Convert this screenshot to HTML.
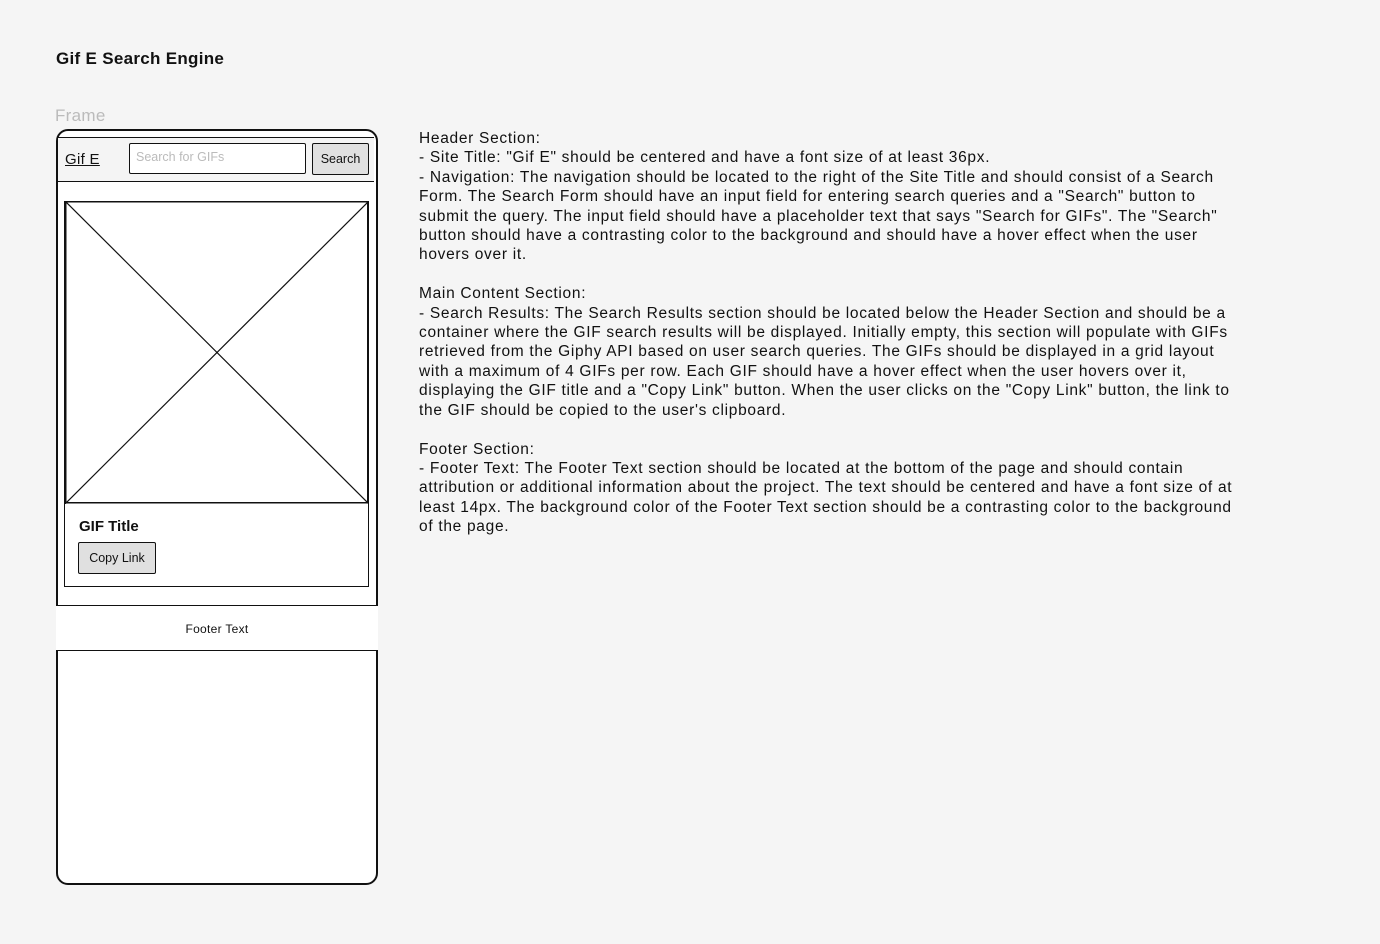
<!DOCTYPE html>
<html><head><style>
body{margin:0;width:1380px;height:944px;background:#f5f5f5;font-family:"Liberation Sans",sans-serif;position:relative;overflow:hidden}
.a{position:absolute}
</style></head><body>
<div class="a" style="left:56px;top:49px;font-size:17px;font-weight:bold;color:#111;letter-spacing:0.3px">Gif E Search Engine</div>
<div class="a" style="left:55px;top:106px;font-size:17px;color:#bbb;letter-spacing:0.3px">Frame</div>
<div class="a" style="left:56px;top:129px;width:318px;height:752px;border:2px solid #111;border-radius:12px;background:#fff"></div>
<div class="a" style="left:58px;top:137px;width:316px;height:43px;background:#f4f4f4;border-top:1.5px solid #111;border-bottom:1.5px solid #111"></div>
<div class="a" style="left:65px;top:151px;font-size:15px;color:#111;text-decoration:underline;letter-spacing:0.3px">Gif E</div>
<div class="a" style="left:129px;top:143px;width:175px;height:29px;border:1.5px solid #111;border-radius:2px;background:#fff"></div>
<div class="a" style="left:136px;top:150px;font-size:12.5px;color:#bbb">Search for GIFs</div>
<div class="a" style="left:312px;top:143px;width:55px;height:30px;border:1.5px solid #111;border-radius:2px;background:#e0e0e0;font-size:12.5px;line-height:31px;text-align:center;color:#111">Search</div>
<div class="a" style="left:64px;top:201px;width:303px;height:384px;border:1.5px solid #111"></div>
<svg class="a" style="left:65px;top:201px" width="304" height="303"><rect x="0.75" y="0.75" width="302" height="301" fill="none" stroke="#111" stroke-width="1.5"/><line x1="0" y1="0" x2="304" y2="303" stroke="#111" stroke-width="1.2"/><line x1="304" y1="0" x2="0" y2="303" stroke="#111" stroke-width="1.2"/></svg>
<div class="a" style="left:79px;top:518px;font-size:15px;font-weight:bold;color:#111">GIF Title</div>
<div class="a" style="left:78px;top:542px;width:76px;height:30px;border:1.5px solid #111;border-radius:2px;background:#e0e0e0;font-size:12.5px;line-height:31px;text-align:center;color:#111">Copy Link</div>
<div class="a" style="left:56px;top:605px;width:322px;height:44px;background:#fff;border-top:1.5px solid #111;border-bottom:1.5px solid #111;font-size:12px;line-height:46px;text-align:center;color:#111;letter-spacing:0.3px">Footer Text</div>
<div class="a" style="left:419px;top:129px;width:900px;font-size:15.5px;line-height:19.4px;color:#111;white-space:nowrap;letter-spacing:0.7px">Header Section:<br>
- Site Title: "Gif E" should be centered and have a font size of at least 36px.<br>
- Navigation: The navigation should be located to the right of the Site Title and should consist of a Search<br>
Form. The Search Form should have an input field for entering search queries and a "Search" button to<br>
submit the query. The input field should have a placeholder text that says "Search for GIFs". The "Search"<br>
button should have a contrasting color to the background and should have a hover effect when the user<br>
hovers over it.<br>
<br>
Main Content Section:<br>
- Search Results: The Search Results section should be located below the Header Section and should be a<br>
container where the GIF search results will be displayed. Initially empty, this section will populate with GIFs<br>
retrieved from the Giphy API based on user search queries. The GIFs should be displayed in a grid layout<br>
with a maximum of 4 GIFs per row. Each GIF should have a hover effect when the user hovers over it,<br>
displaying the GIF title and a "Copy Link" button. When the user clicks on the "Copy Link" button, the link to<br>
the GIF should be copied to the user's clipboard.<br>
<br>
Footer Section:<br>
- Footer Text: The Footer Text section should be located at the bottom of the page and should contain<br>
attribution or additional information about the project. The text should be centered and have a font size of at<br>
least 14px. The background color of the Footer Text section should be a contrasting color to the background<br>
of the page.</div>
</body></html>
